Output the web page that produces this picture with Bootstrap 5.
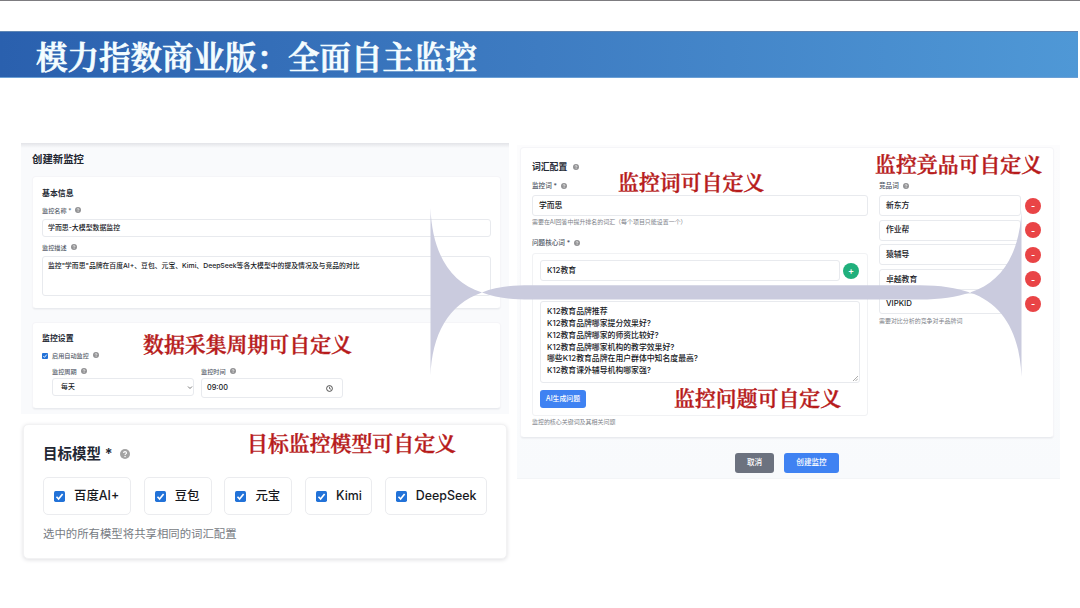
<!DOCTYPE html>
<html lang="zh-CN">
<head>
<meta charset="utf-8">
<meta name="viewport" content="width=device-width, initial-scale=1">
<title>模力指数商业版：全面自主监控</title>
<link href="https://cdn.jsdelivr.net/npm/bootstrap@5.3.0/dist/css/bootstrap.min.css" rel="stylesheet">
<style>
body{font-family:Inter,"Noto Sans CJK SC",sans-serif;background:#fff;color:#16181d;overflow:hidden;font-size:7px;line-height:1.2}
.slide{width:1080px;height:608px;border-top:1px solid #7d7c80;padding-top:30px}
.banner{width:1078px;height:47px;padding:5px 0 0 36px;background:linear-gradient(90deg,#2a60ae,#3e7cc2 50%,#4f98d6);border-top:1px solid #5f86b4;border-bottom:1px solid #6ba0d6}
.banner h1{font-family:"Noto Serif CJK SC","Noto Serif SC","Liberation Serif","Noto Sans CJK SC",serif;font-weight:600;-webkit-text-stroke:.7px #f4fdff;font-size:31.5px;line-height:38px;color:#f4fdff;white-space:nowrap}
.board{padding:65px 0 0 21px}
.colleft{width:488px}
.colright{width:543px;margin:2px 0 0 8px;padding:2px 6px 0 3px;height:334px;background:linear-gradient(#fcfcfd,#f8fafc);border-bottom:1px solid #f3f5f7}
.pane{height:271px;padding:0 8px 0 11px;background:#f9fafc linear-gradient(#e3e4e8,#f9fafc) no-repeat 0 0/100% 5px}
.bar{display:flex;align-items:center;white-space:nowrap}
.pane-title{height:33px;font-size:10.4px;font-weight:700;color:#20242f;padding-top:1px}
.sheet{background:#fff;border-radius:4px;border:1px solid #f5f5f8;border-bottom-color:#e9ebef;box-shadow:0 1px 1px #f0f1f4}
.basic{height:133px;padding:9px 9px 0}
.sched{height:87px;margin-top:13px;padding:8px 9px 0}
.sec{font-size:7.9px;font-weight:700;color:#252a35;height:16px}
.lab{font-size:6.15px;font-weight:500;color:#555c69;height:17px}
.help{width:6px;height:6px;margin-left:4px;margin-top:-2px;flex:none;color:#929294}
.field{border:1px solid #e8eaee;border-radius:3px;background:#fff;padding:0 5px;font-weight:500;white-space:nowrap}
.f-name{height:18px;font-size:6.9px}
.f-desc{height:40px;font-size:6.84px;padding-top:5px}
.tick{width:6px;height:6px;flex:none}
.two{margin-left:10px;gap:7px}
.half{width:142px}
.models{width:484px;height:135px;margin:10px 0 0 2px;padding:20px 0 0 19px;border:1px solid #f2f2f3;box-shadow:0 1px 4px #dfdfe2;border-radius:5px;background:#fff}
.models .head{height:18px;font-size:14.5px;font-weight:600;color:#232733}
.models .head .help{width:10px;height:10px;margin:0 0 0 8px;color:#a3a3a3}
.chips{margin-top:14px;gap:12.7px}
.chip{height:38px;border:1px solid #ebecef;border-radius:5px;padding-left:10px;font-size:12.4px;font-weight:500}
.chip .tick{width:11px;height:11px;margin-right:9px}
.models .note{font-size:11.4px;color:#777b83;height:16px;margin-top:12px}
.vocab{height:291px;padding:11px 10px 0 11px}
.vt{font-size:8.8px;font-weight:700;color:#252a35;height:17px}
.words{width:336px}
.vlab{height:19px;padding-top:2px;font-size:6.6px;font-weight:500;color:#4c5361}
.rival{width:163px;margin-left:11px}
.f-v{height:21px;font-size:7.8px;padding:0 6px}
.tiny{font-size:5.96px;color:#7e8289;height:12px}
.core{height:163px;border:1px solid #f1f2f4;border-radius:3px;padding:6px 7px 0}
.dot{width:16px;height:16px;border-radius:50%;color:#fff;font-size:9px;font-weight:600;flex:none;display:flex;align-items:center;justify-content:center;line-height:1}
.green{background:#20b07c}.red{background:#e94446}
.minus{font-size:9px}
.f-q{height:82px;margin-top:20px;font-size:7.85px;line-height:11.85px;padding:4px 6px 0;width:320px;position:relative}
.f-q svg{position:absolute;right:1px;bottom:1px;width:5px;height:5px}
.btn-x{border:0;border-radius:3px;padding:0;color:#fff;font-size:7.6px;font-weight:500;display:flex;align-items:center;justify-content:center;line-height:1}
.gen{width:46px;height:18px;font-size:6.9px;margin-top:7px}
.blue{background:#3f82f2}.gray{background:#6c727f}
.acts{gap:10px;padding:15px 0 0 215px}
.callout{position:absolute;font-family:"Noto Serif CJK SC","Noto Serif SC","Liberation Serif","Noto Sans CJK SC",serif;font-weight:600;-webkit-text-stroke:.4px #b71b1b;font-size:20.9px;line-height:26px;color:#b71b1b;white-space:nowrap}
.c1{left:143px;top:329px}.c2{left:247px;top:428px}.c3{left:618px;top:167px}.c4{left:875px;top:149px}.c5{left:674px;top:383px}
.lens{position:absolute;left:0;top:0;pointer-events:none}
</style>
</head>
<body>
<svg class="d-none">
<symbol id="q" viewBox="0 0 12 12"><circle cx="6" cy="6" r="6" fill="currentColor"/><path d="M4.3 4.8C4.3 2.6 7.8 2.7 7.8 4.7 7.8 5.9 6.1 5.8 6.1 7.2" fill="none" stroke="#fff" stroke-width="1.4"/><circle cx="6.1" cy="9" r=".9" fill="#fff"/></symbol>
<symbol id="t" viewBox="0 0 12 12"><rect width="12" height="12" rx="1.8" fill="#2272d8"/><path d="M2.7 6.3 5 8.7 9.4 3.2" fill="none" stroke="#fff" stroke-width="1.8"/></symbol>
</svg>
<main class="slide position-relative">
<header class="banner"><h1 class="m-0">模力指数商业版：全面自主监控</h1></header>
<div class="board d-flex align-items-start">
<div class="colleft">
<section class="pane">
<div class="bar pane-title">创建新监控</div>
<div class="sheet basic">
<div class="bar sec">基本信息</div>
<div class="bar lab">监控名称 *<svg class="help"><use href="#q"/></svg></div>
<div class="bar field f-name">学而思-大模型数据监控</div>
<div class="bar lab" style="height:19px;padding-top:2px">监控描述<svg class="help"><use href="#q"/></svg></div>
<div class="field f-desc">监控"学而思"品牌在百度AI+、豆包、元宝、Kimi、DeepSeek等各大模型中的提及情况及与竞品的对比</div>
</div>
<div class="sheet sched">
<div class="bar sec">监控设置</div>
<div class="bar lab" style="height:18px"><svg class="tick me-1"><use href="#t"/></svg><span>启用自动监控</span><svg class="help"><use href="#q"/></svg></div>
<div class="d-flex two">
<div class="half"><div class="bar lab" style="height:13px">监控周期<svg class="help"><use href="#q"/></svg></div>
<div class="bar field f-name justify-content-between pe-0 ps-2" style="padding-left:6px">每天<svg width="6" height="5" viewBox="0 0 6 5"><path d="M1 1.5 3 3.5 5 1.5" fill="none" stroke="#555" stroke-width=".8"/></svg></div></div>
<div class="half"><div class="bar lab" style="height:13px">监控时间<svg class="help"><use href="#q"/></svg></div>
<div class="bar field justify-content-between" style="height:20px;font-size:7.3px">09:00<svg class="me-1" width="7" height="7" viewBox="0 0 14 14"><circle cx="7" cy="7" r="5.8" fill="none" stroke="#333" stroke-width="1.7"/><path d="M7 3.5V7.3L10 8.3" fill="none" stroke="#333" stroke-width="1.4"/></svg></div></div>
</div>
</div>
</section>
<section class="models">
<div class="bar head">目标模型 *<svg class="help"><use href="#q"/></svg></div>
<div class="d-flex chips">
<div class="bar chip" style="width:88px"><svg class="tick"><use href="#t"/></svg>百度AI+</div>
<div class="bar chip" style="width:68px"><svg class="tick"><use href="#t"/></svg>豆包</div>
<div class="bar chip" style="width:68px"><svg class="tick"><use href="#t"/></svg>元宝</div>
<div class="bar chip" style="width:67px"><svg class="tick"><use href="#t"/></svg>Kimi</div>
<div class="bar chip" style="width:102px"><svg class="tick"><use href="#t"/></svg>DeepSeek</div>
</div>
<div class="bar note">选中的所有模型将共享相同的词汇配置</div>
</section>
</div>
<section class="colright">
<div class="sheet vocab">
<div class="bar vt">词汇配置<svg class="help" style="margin-left:6px"><use href="#q"/></svg></div>
<div class="d-flex">
<div class="words">
<div class="bar vlab">监控词 *<svg class="help"><use href="#q"/></svg></div>
<div class="bar field f-v">学而思</div>
<div class="bar tiny">需要在AI回答中提升排名的词汇（每个项目只能设置一个）</div>
<div class="bar vlab" style="height:25px;padding-top:7px">问题核心词 *<svg class="help"><use href="#q"/></svg></div>
<div class="core">
<div class="d-flex align-items-center"><div class="bar field f-v" style="width:300px">K12教育</div><span class="dot green" style="margin-left:3px">+</span></div>
<div class="field f-q">K12教育品牌推荐<br>K12教育品牌哪家提分效果好?<br>K12教育品牌哪家的师资比较好?<br>K12教育品牌哪家机构的教学效果好?<br>哪些K12教育品牌在用户群体中知名度最高?<br>K12教育课外辅导机构哪家强?<svg viewBox="0 0 5 5"><path d="M0 5 5 0M2.5 5 5 2.5" stroke="#888" stroke-width=".7"/></svg></div>
<button class="btn-x gen blue">AI生成问题</button>
</div>
<div class="bar tiny">监控的核心关键词及其相关问题</div>
</div>
<div class="rival">
<div class="bar vlab">竞品词<svg class="help"><use href="#q"/></svg></div>
<div class="d-flex flex-column" style="gap:3.6px">
<div class="d-flex align-items-center"><div class="bar field f-v half">新东方</div><span class="dot red minus ms-1">-</span></div>
<div class="d-flex align-items-center"><div class="bar field f-v half">作业帮</div><span class="dot red minus ms-1">-</span></div>
<div class="d-flex align-items-center"><div class="bar field f-v half">猿辅导</div><span class="dot red minus ms-1">-</span></div>
<div class="d-flex align-items-center"><div class="bar field f-v half">卓越教育</div><span class="dot red minus ms-1">-</span></div>
<div class="d-flex align-items-center"><div class="bar field f-v half">VIPKID</div><span class="dot red minus ms-1">-</span></div>
</div>
<div class="bar tiny">需要对比分析的竞争对手品牌词</div>
</div>
</div>
</div>
<div class="d-flex acts"><button class="btn-x gray" style="width:39px;height:20px">取消</button><button class="btn-x blue" style="width:55px;height:20px">创建监控</button></div>
</section>
</div>
<svg class="lens" style="top:-1px" width="1080" height="608"><path fill="#cacbde" d="M430.5 208C432 250 448 282 482 292.5C448 304 432 335 430.5 376ZM1021.500 210C1020 250 1004 282 970 292.500C1004 304 1020 335 1021.500 377ZM482 292.500C496 287 512 285.200 530 285.200H920C940 285.200 957 288 970 292.500C957 297 940 299.600 920 299.600H530C512 299.600 496 298 482 292.500Z"/></svg>
<div class="callout c1">数据采集周期可自定义</div>
<div class="callout c2">目标监控模型可自定义</div>
<div class="callout c3">监控词可自定义</div>
<div class="callout c4">监控竞品可自定义</div>
<div class="callout c5">监控问题可自定义</div>
</main>
<script src="https://cdn.jsdelivr.net/npm/bootstrap@5.3.0/dist/js/bootstrap.bundle.min.js"></script>
</body>
</html>
